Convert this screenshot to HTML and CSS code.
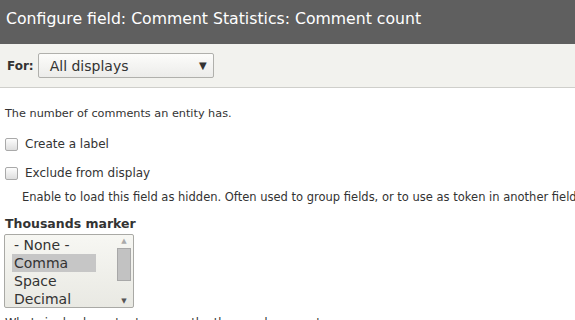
FILE: index.html
```html
<!DOCTYPE html>
<html>
<head>
  <title>Configure field</title>
  <link rel="stylesheet" href="styles.css">
</head>
<body>
  <div class="dialog-title">Configure field: Comment Statistics: Comment count</div>

  <div class="override-bar">
    <label class="for-label" for="displaySelect">For:</label>
    <div class="fake-select" id="displaySelect">
      <span>All displays</span>
      <span class="arrow">&#9660;</span>
    </div>
  </div>

  <div class="form-body">
    <p class="field-help">The number of comments an entity has.</p>

    <div class="form-check">
      <span class="box"></span>
      <span>Create a label</span>
    </div>

    <div class="form-check">
      <span class="box"></span>
      <span>Exclude from display</span>
    </div>
    <div class="check-desc">Enable to load this field as hidden. Often used to group fields, or to use as token in another field.</div>

    <div class="item-label">Thousands marker</div>
    <div class="listbox">
      <div class="options">
        <div class="opt">- None -</div>
        <div class="opt selected">Comma</div>
        <div class="opt">Space</div>
        <div class="opt">Decimal</div>
      </div>
      <div class="scrollbar">
        <span class="sb-up">&#9650;</span>
        <span class="sb-thumb"></span>
        <span class="sb-down">&#9660;</span>
      </div>
    </div>
    <div class="item-desc">What single character to use as the thousands separator.</div>
  </div>
</body>
</html>
```

FILE: styles.css
```css
body {
  font-family: "DejaVu Sans", Verdana, sans-serif;
  color: #333;
  margin: 0;
  background: #fff;
  overflow: hidden;
}

.dialog-title {
  background-color: #5f5f5f;
  color: #fff;
  font-size: 15.7px;
  height: 44px;
  line-height: 38px;
  padding-left: 6px;
  white-space: nowrap;
}

.override-bar {
  background-color: #f2f2ee;
  border-bottom: 1px solid #cfcfcb;
  height: 43px;
  display: flex;
  align-items: center;
  padding-left: 7px;
  gap: 4px;
}

.for-label {
  font-weight: bold;
  font-size: 12px;
  color: #333;
}

.fake-select {
  width: 157px;
  height: 23px;
  border: 1px solid #b0b0ac;
  border-radius: 2px;
  background: linear-gradient(#fcfcfa, #ececea);
  display: flex;
  align-items: center;
  justify-content: space-between;
  padding: 0 6px 0 11px;
  font-size: 14px;
  color: #333;
}

.fake-select .arrow {
  font-size: 10px;
}

.form-body {
  padding: 0 5px;
}

.field-help {
  font-size: 11.25px;
  margin: 19px 0 16px 0;
}

.form-check {
  display: flex;
  align-items: center;
  gap: 7px;
  font-size: 12px;
  height: 16px;
  margin-bottom: 13px;
}

.box {
  width: 11px;
  height: 11px;
  border: 1px solid #a9a9a9;
  border-radius: 2px;
  background: linear-gradient(#fdfdfd, #dedede);
}

.check-desc {
  font-size: 11.5px;
  white-space: nowrap;
  margin: -4px 0 12px 17px;
}

.item-label {
  font-weight: bold;
  font-size: 12.5px;
  margin-bottom: 3px;
}

.listbox {
  width: 128px;
  height: 72px;
  border: 1px solid #a9a9a5;
  border-radius: 2px;
  background: linear-gradient(#f7f7f3, #e9e9e3);
  display: flex;
  margin-left: -1px;
}

.options {
  flex: 1;
  padding: 1px 0 0 7px;
  font-size: 14px;
}

.opt {
  height: 18px;
  line-height: 18px;
  padding-left: 2px;
  width: 82px;
}

.opt.selected {
  background-color: #c6c6c6;
}

.scrollbar {
  width: 14px;
  display: flex;
  flex-direction: column;
  align-items: center;
  padding: 2px 2px 2px 0;
  font-size: 7px;
  color: #aaa;
}

.sb-down {
  color: #555;
}

.sb-thumb {
  width: 12px;
  height: 31px;
  background-color: #c2c2c2;
  border: 1px solid #a8a8a8;
  margin: 3px 0 auto 0;
}

.item-desc {
  font-size: 11.5px;
  margin-top: 8px;
}
```
